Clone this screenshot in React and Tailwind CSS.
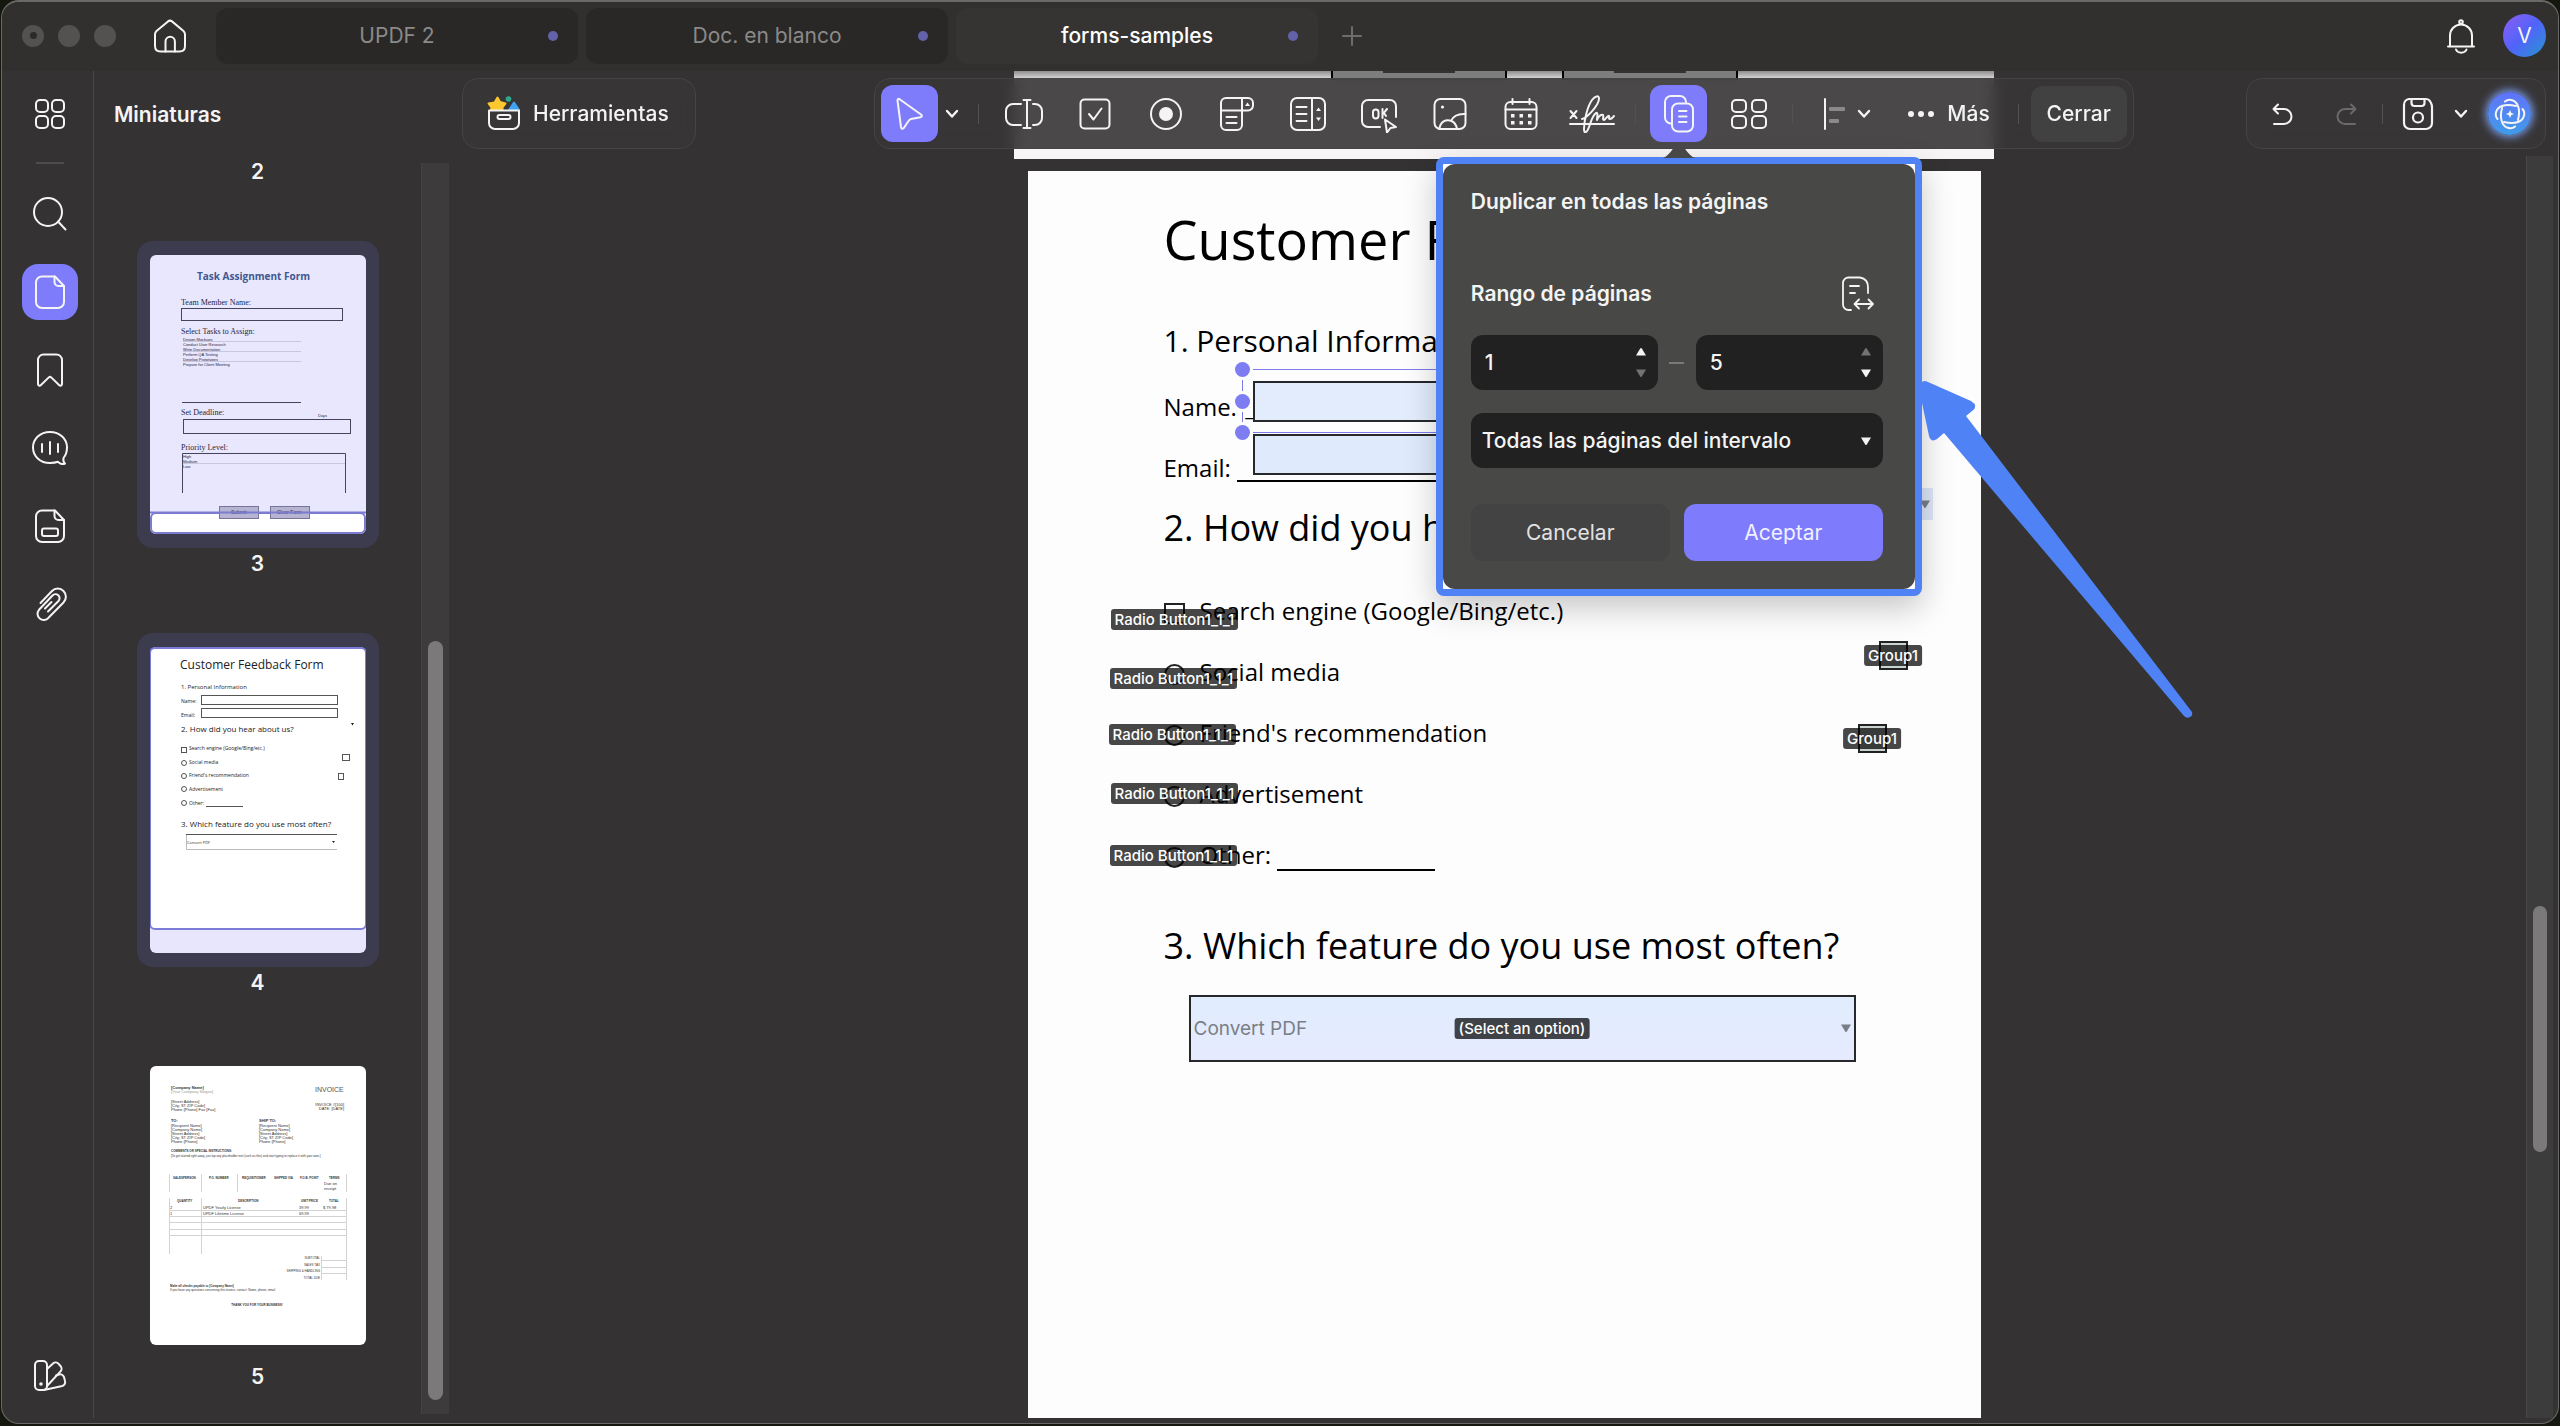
import { useState } from "react";

// Small wrapper so every line icon shares the same stroke setup
const Icon = ({ size = 36, width, height, stroke = 2, className = "", children }) => (
  <svg
    width={width || size}
    height={height || size}
    viewBox={`0 0 ${width || size} ${height || size}`}
    fill="none"
    stroke="currentColor"
    strokeWidth={stroke}
    strokeLinecap="round"
    strokeLinejoin="round"
    className={`shrink-0 ${className}`}
    aria-hidden="true"
  >
    {children}
  </svg>
);

const HomeIcon = () => (
  <Icon>
    <path d="M16 3.4 Q18 1.8 20 3.4 L31.5 13 Q33 14.4 33 16.5 V28 Q33 33.5 27.5 33.5 H8.5 Q3 33.5 3 28 V16.5 Q3 14.4 4.5 13 Z" />
    <path d="M13.5 33.5 V23.5 a4.7 4.7 0 0 1 9.4 0 V33.5" />
  </Icon>
);

const GridIcon = ({ wide }) => (
  <Icon width={wide ? 40 : 36} height={36}>
    {(wide ? [3, 23] : [4, 20]).map((x) =>
      [4, 20].map((y) => (
        <rect key={`${x}-${y}`} x={x} y={y} width={wide ? 14 : 12} height="12" rx="4" />
      ))
    )}
  </Icon>
);

const SearchIcon = () => (
  <Icon>
    <circle cx="16" cy="16" r="14" />
    <path d="M26 25.5 L33.5 33.5" />
  </Icon>
);

const PageIcon = () => (
  <Icon>
    <path d="M10 2.5 H23 L32 12 V28 a6 6 0 0 1 -6 6 H10 a6 6 0 0 1 -6 -6 V8.5 a6 6 0 0 1 6 -6 Z" />
    <path d="M22.5 2.5 V8 a4 4 0 0 0 4 4 H32" />
  </Icon>
);

const BookmarkIcon = () => (
  <Icon>
    <path d="M6 8 a5.5 5.5 0 0 1 5.5 -5.5 H24.5 a5.5 5.5 0 0 1 5.5 5.5 V32 a1.6 1.6 0 0 1 -2.7 1.2 L19.2 25.4 a1.8 1.8 0 0 0 -2.4 0 L8.7 33.2 A1.6 1.6 0 0 1 6 32 Z" />
  </Icon>
);

const CommentIcon = () => (
  <Icon width={38} height={36}>
    <path d="M33 34 C30 34 28 33 27 31.8 C24 33 22 33 19 33 C9 33 2 26 2 17.5 C2 9 9 2 19 2 C29 2 36 9 36 17.5 C36 22 34.5 25.5 32.5 28 C32 30 32.5 32 34 33.6 Z" />
    <path d="M11 14 V22 M19 12 V24 M27 14 V22" />
  </Icon>
);

const FormPageIcon = () => (
  <Icon>
    <path d="M10 2.5 H23 L32 12 V28 a6 6 0 0 1 -6 6 H10 a6 6 0 0 1 -6 -6 V8.5 a6 6 0 0 1 6 -6 Z" />
    <path d="M22.5 2.5 V8 a4 4 0 0 0 4 4 H32" />
    <rect x="10" y="20.5" width="16" height="7.5" rx="2" />
  </Icon>
);

const ClipIcon = () => (
  <Icon>
    <path d="M8.5 17 L20 5 a8 8 0 0 1 11.5 11.5 L16.5 31.8 a6 6 0 0 1 -9.5 -8 L20.5 9.5 a4 4 0 0 1 6 5.5 L16 25.5 M13 22.5 L19.5 16" />
  </Icon>
);

const SwatchIcon = () => (
  <Icon>
    <rect x="3" y="3" width="12" height="29" rx="4" />
    <path d="M15 11 L21 5.5 a4 4 0 0 1 5.6 0.3 L28.5 8 a4 4 0 0 1 -0.2 5.6 L15 28" />
    <path d="M24 17.5 L27 16.5 a4 4 0 0 1 5 2.6 L33 23 a4 4 0 0 1 -2.7 5 L12 32" />
    <circle cx="9" cy="26" r="0.8" />
  </Icon>
);

const Chevron = () => (
  <Icon width={14} height={10} stroke={2.4}>
    <path d="M2 2 L7 7.5 L12 2" />
  </Icon>
);

const Triangle = ({ up, className = "" }) => (
  <svg width="12" height="10" viewBox="0 0 12 10" className={className} fill="currentColor" aria-hidden="true">
    <path d={up ? "M1 8.5 L5.2 1.5 Q6 0.5 6.8 1.5 L11 8.5 Z" : "M1 1.5 L5.2 8.5 Q6 9.5 6.8 8.5 L11 1.5 Z"} />
  </svg>
);

const CursorIcon = () => (
  <Icon>
    <path d="M5.5 4.5 Q5.5 1.8 8 3.5 L29 18.5 Q31 20.5 28.5 21.2 L19 23 Q17.5 23.5 16.5 25 L11.8 32 Q9.6 34 9 31 Z" />
  </Icon>
);

const TextFieldIcon = () => (
  <Icon width={40}>
    <path d="M17 29 H9 a7 7 0 0 1 -7 -7 V15 a7 7 0 0 1 7 -7 H17 M29 8 H31 a7 7 0 0 1 7 7 V22 a7 7 0 0 1 -7 7 H29" />
    <path d="M23 4 V32 M19.5 4 H26.5 M19.5 32 H26.5" />
  </Icon>
);

const CheckboxIcon = () => (
  <Icon>
    <rect x="3.5" y="3.5" width="29" height="29" rx="4" />
    <path d="M12 18 L16.5 23.5 L24.5 12.5" />
  </Icon>
);

const RadioIcon = () => (
  <Icon>
    <circle cx="18" cy="18" r="15" />
    <circle cx="18" cy="18" r="6" fill="currentColor" />
  </Icon>
);

const DropdownIcon = () => (
  <Icon width={38} height={38}>
    <path d="M24 15.5 V30 a5 5 0 0 1 -5 5 H8 a5 5 0 0 1 -5 -5 V8 a5 5 0 0 1 5 -5 H30 a5 5 0 0 1 5 5 V10.5 a5 5 0 0 1 -5 5 H3 M24 3 V15.5" />
    <path d="M8.5 22 H18.5 M8.5 28 H18.5" />
    <path d="M27 11 L29.5 7.5 L32 11 Z" fill="currentColor" stroke="none" />
  </Icon>
);

const ListIcon = () => (
  <Icon width={38} height={38}>
    <rect x="2" y="3" width="34" height="32" rx="6" />
    <path d="M23 3 V35 M7.5 12 H17.5 M7.5 19 H17.5 M7.5 26 H17.5" />
    <path d="M27 16 L29.5 12.5 L32 16 Z M27 22.5 L29.5 26 L32 22.5 Z" fill="currentColor" stroke="none" />
  </Icon>
);

const OkIcon = () => (
  <Icon width={38} height={38}>
    <path d="M20 32 H8 a6 6 0 0 1 -6 -6 V11 a6 6 0 0 1 6 -6 H30 a6 6 0 0 1 6 6 V22" />
    <rect x="13" y="14.5" width="5.5" height="9" rx="2.7" />
    <path d="M22.5 14 V23 M27 14 L22.5 19.5 M24 18 L26 21" />
    <path d="M25 24.5 L36 32 L30.5 33 L27 37.500 Z" />
  </Icon>
);

const ImageIcon = () => (
  <Icon>
    <rect x="2.5" y="3" width="31" height="30" rx="6" />
    <circle cx="10.5" cy="11" r="1.6" fill="currentColor" stroke="none" />
    <path d="M7.5 33 C8 26 14 22.5 19.5 25 C23 26.5 24.5 30 25 33 M19 25 C21 20.5 26 17.5 33.5 18" />
  </Icon>
);

const CalendarIcon = () => (
  <Icon>
    <rect x="2.5" y="6" width="31" height="27" rx="5" />
    <path d="M2.5 13.5 H33.5 M9.5 3 V8 M26.5 3 V8" />
    <g fill="currentColor" stroke="none">
      {[8, 16.5, 25].map((x) => [18, 25].map((y) => <rect key={`${x}-${y}`} x={x} y={y} width="3.5" height="3.5" />))}
    </g>
  </Icon>
);

const SignIcon = () => (
  <Icon width={46} height={38}>
    <path d="M1.5 16 L7.5 23 M7.5 16 L1.5 23 M1 29 H45" />
    <path d="M13 24 C18 23 30 10 30 3.5 C30 0 26 1 23 5 C18 12 15 27 15 34 C15 39 18 38 20 32 C22 27 23 21 27 18 C29.5 17 28 22 28 25 C29 22 32 19 34 20 C35 22 33 25 35 25 C37 24 39 20 40 21 C41 22 39 24 41 24 C43 24 44 22 45 21" />
  </Icon>
);

const DuplicateIcon = () => (
  <Icon width={32} height={38}>
    <path d="M8 28.5 a6 6 0 0 1 -6 -6 V7 a6 6 0 0 1 6 -6 H17 a6 6 0 0 1 6 6" />
    <rect x="9" y="8.5" width="21" height="28" rx="6" />
    <path d="M16 16 H23.5 M16 21.5 H23.5 M16 27 H23.5" />
  </Icon>
);

const AlignIcon = () => (
  <Icon width={22} height={32}>
    <path d="M2 1 V31" />
    <g fill="#8b8a8a" stroke="none">
      <rect x="6" y="9" width="16" height="4" rx="1" />
      <rect x="6" y="21" width="10" height="4" rx="1" />
    </g>
  </Icon>
);

const ToolboxIcon = () => (
  <Icon width={34} height={36}>
    <path d="M10.5 1.5 L13 6 L18.5 7.5 L15.5 11.5 V14 H4 L4.5 11.5 L1.5 7.5 L7.5 6.5 Z" fill="#fdc82f" stroke="#fdc82f" />
    <circle cx="21.5" cy="3" r="2.8" fill="#2fa98c" stroke="none" />
    <path d="M22 14 L27 6.5 L32 14 Z" fill="#3fa3f2" stroke="#3fa3f2" />
    <path d="M2 14.5 H32 V27 a6 6 0 0 1 -6 6 H8 a6 6 0 0 1 -6 -6 Z" fill="#383636" />
    <rect x="10.5" y="19" width="13" height="4" rx="2" />
  </Icon>
);

const RangeIcon = () => (
  <Icon width={34} height={36} stroke={1.8}>
    <path d="M10 34 H7.5 a5.5 5.5 0 0 1 -5.5 -5.5 V7 a5.5 5.5 0 0 1 5.5 -5.5 H19 Q27 3 27 11 V17" />
    <path d="M9 10 H18 M9 17 H14 M14 28 H31.5 M18 23.5 L13.5 28 L18 32.5 M27.5 23.5 L32 28 L27.5 32.5" />
  </Icon>
);

const BellIcon = () => (
  <Icon>
    <circle cx="18" cy="4" r="1.8" />
    <path d="M5 28.5 H31 M7 28.5 V17.5 a11 11 0 0 1 22 0 V28.5 M13 31.5 a5.5 4.5 0 0 0 10.5 0" />
  </Icon>
);

const UndoIcon = ({ flip }) => (
  <Icon width={24} height={24} className={flip ? "-scale-x-100" : ""}>
    <path d="M2.5 7 H13 a7.5 7.5 0 0 1 0 15 H3 M7 2.5 L2.5 7 L7 11.5" />
  </Icon>
);

const SaveIcon = () => (
  <Icon stroke={2.2}>
    <path d="M9 3 H26 Q28 3 29.5 4.5 L31 7 Q32 9 32 11 V27 a6 6 0 0 1 -6 6 H10 a6 6 0 0 1 -6 -6 V9 a6 6 0 0 1 5 -6 Z" />
    <path d="M11.5 3 V7 a3 3 0 0 0 3 3 H21.5 a3 3 0 0 0 3 -3 V3" />
    <circle cx="18" cy="21.5" r="5" />
  </Icon>
);

const AiIcon = () => (
  <Icon width={32} height={32} stroke={2}>
    <path d="M11 3.5 C15 0 22 2 24 8 C26 13 25 18 24 22" />
    <path d="M28.5 11 C32 15 30 22 24 24 C19 26 14 25 10 24" />
    <path d="M21 28.5 C17 32 10 30 8 24 C6 19 7 14 8 10" />
    <path d="M3.5 21 C0 17 2 10 8 8 C13 6 18 7 22 8" />
    <path d="M16 12 L17.2 14.8 L20 16 L17.2 17.2 L16 20 L14.8 17.2 L12 16 L14.8 14.8 Z" fill="currentColor" stroke="none" />
  </Icon>
);

const TaskThumb = () => (
  <svg viewBox="0 0 216 279" className="block w-full" fontFamily="'Liberation Serif', serif" fontWeight="400" fontSize="8" fill="#26263a">
    <rect width="216" height="279" rx="6" fill="#e9e7fe" />
    <text x="47" y="25" fontSize="10" fontWeight="700" fontFamily="'Open Sans', sans-serif" fill="#40588f">Task Assignment Form</text>
    <text x="31" y="50">Team Member Name:</text>
    <text x="31" y="79">Select Tasks to Assign:</text>
    <text x="31" y="160">Set Deadline:</text>
    <text x="31" y="195">Priority Level:</text>
    <g fontFamily="'Liberation Sans', sans-serif" fontSize="4">
      {["Design Mockups", "Conduct User Research", "Write Documentation", "Perform QA Testing", "Develop Prototypes", "Prepare for Client Meeting"].map((t, i) => (
        <text key={t} x="33" y={86 + i * 5}>{t}</text>
      ))}
      <text x="168" y="162">Days</text>
      <text x="33" y="203">High</text>
      <text x="33" y="208">Medium</text>
      <text x="33" y="213">Low</text>
    </g>
    <g fill="none" stroke="#45435e">
      <rect x="31.5" y="53.5" width="161" height="12" />
      <path d="M32 147.5 H151" />
      <rect x="33.5" y="164.5" width="167" height="14" />
      <path d="M32.5 238 V198.5 H195.5 V238" />
    </g>
    <path d="M33 86.5 H151 M33 96.5 H151 M33 106.5 H151 M33 208.5 H195" stroke="#c9c6de" />
    <rect x="1" y="258" width="214" height="20" rx="5" fill="#fff" stroke="#7b7bd0" strokeWidth="2" />
    <g fill="#b6b3d3" stroke="#77749a">
      <rect x="69.5" y="251.5" width="39" height="12" />
      <rect x="120.5" y="251.5" width="39" height="12" />
    </g>
    <g fontFamily="'Liberation Sans', sans-serif" fontSize="5">
      <text x="81" y="259">Submit</text>
      <text x="127" y="259">Clear Form</text>
    </g>
    <path d="M0 257.5 H216" stroke="#7b7bd0" strokeWidth="2" />
  </svg>
);

const FeedbackThumb = () => (
  <svg viewBox="0 0 216 306" className="block w-full" fontFamily="'Open Sans', sans-serif" fontWeight="400" fontSize="5" fill="#222">
    <rect width="216" height="306" rx="6" fill="#e8e6fc" />
    <rect x="0" y="1" width="216" height="281" rx="5" fill="#fff" stroke="#7b7bd8" strokeWidth="2" />
    <text x="30" y="22" fontSize="12">Customer Feedback Form</text>
    <text x="31" y="42" fontSize="6">1. Personal Information</text>
    <text x="31" y="56">Name:</text>
    <text x="31" y="70">Email:</text>
    <text x="31" y="85" fontSize="8">2. How did you hear about us?</text>
    <text x="39" y="103">Search engine (Google/Bing/etc.)</text>
    <text x="39" y="117">Social media</text>
    <text x="39" y="130">Friend's recommendation</text>
    <text x="39" y="144">Advertisement</text>
    <text x="39" y="158">Other:</text>
    <text x="31" y="180" fontSize="8">3. Which feature do you use most often?</text>
    <text x="37" y="197" fontSize="4">Convert PDF</text>
    <g fill="none" stroke="#555">
      <rect x="51.5" y="48.5" width="136" height="9" />
      <rect x="51.5" y="61.5" width="136" height="9" />
      <rect x="31.5" y="100.5" width="5" height="5" />
      {[116, 129, 142, 156].map((y) => <circle key={y} cx="34" cy={y} r="2.5" />)}
      <path d="M56 159.5 H93 M36 187.5 H187" />
      <rect x="192.5" y="107.5" width="7" height="6" />
      <rect x="188.5" y="126.5" width="5" height="6" />
    </g>
    <path d="M36.5 188 V202.5 H187" fill="none" stroke="#bbb" />
    <path d="M201 76 H204 L202.5 78.5 Z M182 194 H185 L183.5 196 Z" />
  </svg>
);

const InvoiceThumb = () => (
  <svg viewBox="0 0 216 279" className="block w-full" fontFamily="'Liberation Sans', sans-serif" fontWeight="400" fontSize="4" fill="#333">
    <rect width="216" height="279" rx="6" fill="#fff" />
    <text x="21" y="23" fontWeight="700">[Company Name]</text>
    <text x="21" y="27" fill="#999">[Your Company Slogan]</text>
    <text x="165" y="26" fontSize="7" fill="#555">INVOICE</text>
    {["[Street Address]", "[City, ST ZIP Code]", "Phone [Phone]  Fax [Fax]"].map((t, i) => (
      <text key={t} x="21" y={37 + i * 4}>{t}</text>
    ))}
    <text x="194" y="40" textAnchor="end">INVOICE #[100]</text>
    <text x="194" y="44" textAnchor="end">DATE: [DATE]</text>
    {[21, 109].map((x) => (
      <g key={x}>
        <text x={x} y="56" fontWeight="700">{x === 21 ? "TO:" : "SHIP TO:"}</text>
        {["[Recipient Name]", "[Company Name]", "[Street Address]", "[City, ST ZIP Code]", "Phone [Phone]"].map((t, i) => (
          <text key={t} x={x} y={61 + i * 4}>{t}</text>
        ))}
      </g>
    ))}
    <text x="21" y="86" fontSize="3" fontWeight="700">COMMENTS OR SPECIAL INSTRUCTIONS:</text>
    <text x="21" y="91" fontSize="3">[To get started right away, just tap any placeholder text (such as this) and start typing to replace it with your own.]</text>
    <g fontSize="3" fontWeight="700">
      {[[23, "SALESPERSON"], [59, "P.O. NUMBER"], [92, "REQUISITIONER"], [124, "SHIPPED VIA"], [150, "F.O.B. POINT"], [179, "TERMS"]].map(([x, t]) => (
        <text key={t} x={x} y="113">{t}</text>
      ))}
      {[[27, "QUANTITY"], [88, "DESCRIPTION"], [151, "UNIT PRICE"], [179, "TOTAL"]].map(([x, t]) => (
        <text key={t} x={x} y="136">{t}</text>
      ))}
    </g>
    <text x="174" y="119">Due on</text>
    <text x="174" y="124">receipt</text>
    <text x="20" y="143">2</text>
    <text x="53" y="143">UPDF Yearly License</text>
    <text x="149" y="143">39.99</text>
    <text x="173" y="143">$ 79.98</text>
    <text x="20" y="149">1</text>
    <text x="53" y="149">UPDF Lifetime License</text>
    <text x="149" y="149">69.99</text>
    <path
      d="M19.5 108 V126 M51.5 108 V126 M87.5 108 V126 M196.5 108 V126 M19.5 132 V188 M51.5 132 V188 M196.5 132 V214 M171.5 190 V214 M19 144.5 H196 M19 150.5 H196 M19 156.5 H196 M19 163.5 H196 M19 169.5 H196 M171 194.5 H196 M171 201.5 H196 M171 207.5 H196"
      stroke="#d3d3d3"
      fill="none"
    />
    {["SUBTOTAL", "SALES TAX", "SHIPPING & HANDLING", "TOTAL DUE"].map((t, i) => (
      <text key={t} x="170" y={193 + i * 6.5} fontSize="3" textAnchor="end">{t}</text>
    ))}
    <text x="20" y="221" fontSize="3" fontWeight="700">Make all checks payable to [Company Name]</text>
    <text x="20" y="225" fontSize="3">If you have any questions concerning this invoice, contact: Name, phone, email</text>
    <text x="107" y="240" fontSize="3" fontWeight="700" textAnchor="middle">THANK YOU FOR YOUR BUSINESS!</text>
  </svg>
);

const tabs = [
  { title: "UPDF 2", active: false },
  { title: "Doc. en blanco", active: false },
  { title: "forms-samples", active: true },
];

const TopBar = () => (
  <header className="flex h-[69px] shrink-0 items-center bg-[#32302f] pb-0.5 pl-5 pr-3">
    <div className="flex gap-[14px]">
      <span className="flex size-[22px] items-center justify-center rounded-full bg-[#535251]">
        <span className="size-[7px] rounded-full bg-[#2b2a29]" />
      </span>
      <span className="size-[22px] rounded-full bg-[#535251]" />
      <span className="size-[22px] rounded-full bg-[#535251]" />
    </div>
    <button title="Inicio" className="ml-9">
      <HomeIcon />
    </button>
    <nav className="ml-7 flex gap-2">
      {tabs.map((tab) => (
        <button
          key={tab.title}
          className={`relative h-14 w-[362px] rounded-xl text-[21px] ${
            tab.active ? "bg-[#363433] font-medium text-white" : "bg-[#292826] text-[#8b8a89]"
          }`}
        >
          {tab.title}
          <span className="absolute right-5 top-1/2 size-[10px] -translate-y-1/2 rounded-full bg-[#6461ab]" />
        </button>
      ))}
    </nav>
    <button title="Nueva pestaña" className="ml-6 text-[#6e6d6c]">
      <Icon width={20} height={20}>
        <path d="M10 1 V19 M1 10 H19" />
      </Icon>
    </button>
    <button title="Notificaciones" className="ml-auto">
      <BellIcon />
    </button>
    <button className="ml-6 size-[43px] rounded-full bg-linear-135 from-[#8b5cf0] via-[#4f63fb] to-[#1a92cc] text-[21px]">
      V
    </button>
  </header>
);

const sideItems = [
  ["Buscar", <SearchIcon />],
  ["Miniaturas", <PageIcon />],
  ["Marcadores", <BookmarkIcon />],
  ["Comentarios", <CommentIcon />],
  ["Formularios", <FormPageIcon />],
  ["Adjuntos", <ClipIcon />],
];

const SideRail = () => (
  <aside className="flex w-[92px] shrink-0 flex-col items-center border-r border-[#4a4948] pt-[15px] pb-[14px] pl-1">
    <button title="Menú" className="flex size-14 items-center justify-center">
      <GridIcon />
    </button>
    <span className="mt-5 h-0.5 w-7 bg-[#4d4c4b]" />
    <div className="mt-[22px] flex flex-col gap-[22px]">
      {sideItems.map(([label, icon]) => (
        <button
          key={label}
          title={label}
          className={`flex size-14 items-center justify-center rounded-2xl ${
            label === "Miniaturas" ? "bg-[#7e7cfa]" : ""
          }`}
        >
          {icon}
        </button>
      ))}
    </div>
    <button title="Tema" className="mt-auto flex size-14 items-center justify-center">
      <SwatchIcon />
    </button>
  </aside>
);

const ThumbPanel = () => (
  <section className="flex w-[361px] shrink-0 overflow-hidden">
    <div className="flex flex-1 flex-col">
      <h2 className="ml-5 mt-7 text-[21px] leading-8 font-semibold">Miniaturas</h2>
      <ol className="mt-[25px] flex flex-col items-center text-[21px] leading-8 font-semibold">
        <li>2</li>
        <li className="mt-[53px] flex flex-col items-center">
          <div className="w-[242px] rounded-2xl bg-[#3d3b4e] px-[13px] py-[14px]">
            <TaskThumb />
          </div>
          <span>3</span>
        </li>
        <li className="mt-[53px] flex flex-col items-center">
          <div className="w-[242px] rounded-2xl bg-[#3d3b4e] px-[13px] py-[14px]">
            <FeedbackThumb />
          </div>
          <span>4</span>
        </li>
        <li className="mt-[67px] flex flex-col items-center">
          <div className="w-[242px] px-[13px]">
            <InvoiceThumb />
          </div>
          <span className="mt-4">5</span>
        </li>
      </ol>
    </div>
    <div className="mt-[92px] mb-1 w-7 border-l border-[#454344] bg-[#3d3b3c] px-1.5 pt-[478px] pb-[14px]">
      <div className="h-full rounded-full bg-[#7b797a]" />
    </div>
    <div className="w-[6px]" />
  </section>
);

const ToolButton = ({ label, children }) => (
  <button title={label} className="flex h-14 w-[71px] items-center justify-center">
    {children}
  </button>
);

const Divider = () => <span className="h-5 w-px bg-[#535252]" />;

const DuplicatePopup = () => {
  const [from, setFrom] = useState(1);
  const [to, setTo] = useState(5);

  const fields = [
    { id: "from", label: "Desde", value: from, set: setFrom },
    { id: "to", label: "Hasta", value: to, set: setTo },
  ];

  return (
    <div className="absolute left-1/2 top-full mt-[15px] w-[486px] -translate-x-1/2">
      {/* Caret under the toolbar button */}
      <svg width="32" height="14" viewBox="0 0 32 14" className="absolute -top-[13px] left-1/2 -translate-x-1/2" aria-hidden="true">
        <path d="M0 14 C6 12 10 4 12.5 1.5 Q16 -1 19.5 1.5 C22 4 26 12 32 14 Z" fill="#484847" />
      </svg>

      <div className="rounded-lg border-[7px] border-[#4f83f5] bg-white shadow-[0_12px_32px_rgba(0,0,0,0.22)]">
        <form className="rounded-xl bg-[#484847] pt-[22px] pr-8 pb-7 pl-7" onSubmit={(e) => e.preventDefault()}>
          <h3 className="text-[21px] leading-8 font-semibold">Duplicar en todas las páginas</h3>

          <div className="mt-[58px] flex h-9 items-center justify-between pr-2">
            <span className="text-[21px] leading-8 font-semibold">Rango de páginas</span>
            <button type="button" title="Rango">
              <RangeIcon />
            </button>
          </div>

          <div className="mt-[23px] flex items-center justify-between">
            {fields.map((f, i) => (
              <div key={f.id} className="contents">
                {i === 1 && <span className="h-0.5 w-[15px] bg-[#7b7a7a]" />}
                <div className="relative flex h-[55px] w-[187px] items-center rounded-xl bg-[#212122]">
                  <input
                    type="text"
                    inputMode="numeric"
                    aria-label={f.label}
                    value={f.value}
                    onChange={(e) => f.set(e.target.value)}
                    className="w-full bg-transparent px-[14px] text-[21px] font-medium outline-none"
                  />
                  <div className="absolute right-[11px] flex flex-col gap-[11px]">
                    <button type="button" title="Más" className={i === 1 ? "text-[#747373]" : ""} onClick={() => f.set(Math.min(5, Number(f.value) + 1))}>
                      <Triangle up />
                    </button>
                    <button type="button" title="Menos" className={i === 0 ? "text-[#747373]" : ""} onClick={() => f.set(Math.max(1, Number(f.value) - 1))}>
                      <Triangle />
                    </button>
                  </div>
                </div>
              </div>
            ))}
          </div>

          <div className="relative mt-[23px]">
            <select aria-label="Páginas" className="h-[55px] w-full appearance-none rounded-xl bg-[#212122] px-[11px] text-[21px] font-medium outline-none">
              <option>Todas las páginas del intervalo</option>
              <option>Páginas pares</option>
              <option>Páginas impares</option>
            </select>
            <Triangle className="pointer-events-none absolute right-[11px] top-[23px]" />
          </div>

          <div className="mt-9 grid grid-cols-2 gap-[14px] text-[21px]">
            <button type="button" className="h-[57px] rounded-xl bg-[#444344] text-[#e2e2e2]">
              Cancelar
            </button>
            <button type="submit" className="h-[57px] rounded-xl bg-[#7e7cfc] text-[#f0f0ff]">
              Aceptar
            </button>
          </div>
        </form>
      </div>

      {/* Callout arrow */}
      <svg width="272" height="344" viewBox="0 0 272 344" className="absolute left-full top-[222px]" aria-hidden="true">
        <path
          d="M0 3 Q2 1 6 3 L49 22 Q57 27 50 32 L44 37 L270 333 Q271 337 268 338 Q265 340 262 337 L22 54 L15 60 Q9 64 7 57 L0 24 Z"
          fill="#4f83f5"
        />
      </svg>
    </div>
  );
};

const panelClass = "flex h-[71px] items-center rounded-2xl border border-[#464444] bg-[#373536]/90 backdrop-blur-sm";

const Toolbar = () => (
  <div className="absolute inset-x-0 top-[7px] z-10 grid grid-cols-[1fr_auto_1fr] px-[7px]">
    <button className={`${panelClass} w-[234px] gap-3 justify-self-start pl-6 text-[21px] font-medium`}>
      <ToolboxIcon />
      Herramientas
    </button>

    <div className={`${panelClass} px-1.5`}>
      <button title="Seleccionar" className="flex size-[57px] items-center justify-center rounded-xl bg-[#7e7cfa]">
        <CursorIcon />
      </button>
      <button title="Opciones" className="flex h-14 w-7 items-center justify-center">
        <Chevron />
      </button>
      <span className="w-3" />
      <Divider />
      <span className="w-[9px]" />
      <ToolButton label="Campo de texto"><TextFieldIcon /></ToolButton>
      <ToolButton label="Casilla"><CheckboxIcon /></ToolButton>
      <ToolButton label="Botón de radio"><RadioIcon /></ToolButton>
      <ToolButton label="Desplegable"><DropdownIcon /></ToolButton>
      <ToolButton label="Lista"><ListIcon /></ToolButton>
      <ToolButton label="Botón"><OkIcon /></ToolButton>
      <ToolButton label="Imagen"><ImageIcon /></ToolButton>
      <ToolButton label="Fecha"><CalendarIcon /></ToolButton>
      <ToolButton label="Firma"><SignIcon /></ToolButton>
      <span className="w-2" />
      <Divider />
      <div className="relative ml-[14px]">
        <button title="Duplicar" className="flex size-[57px] items-center justify-center rounded-xl bg-[#7e7cfa]">
          <DuplicateIcon />
        </button>
        <DuplicatePopup />
      </div>
      <span className="w-[6px]" />
      <ToolButton label="Varias copias"><GridIcon wide /></ToolButton>
      <span className="w-2" />
      <Divider />
      <button title="Alinear" className="ml-[30px] flex h-14 items-center gap-3">
        <AlignIcon />
        <Chevron />
      </button>
      <button className="ml-9 flex h-14 items-center gap-3 text-[21px] font-medium">
        <svg width="28" height="8" viewBox="0 0 28 8" fill="currentColor" aria-hidden="true">
          <circle cx="4" cy="4" r="3" />
          <circle cx="14" cy="4" r="3" />
          <circle cx="24" cy="4" r="3" />
        </svg>
        Más
      </button>
      <span className="w-7" />
      <Divider />
      <button className="ml-3 h-14 w-[96px] rounded-xl bg-[#424141] text-[21px] font-medium">Cerrar</button>
    </div>

    <div className={`${panelClass} justify-self-end pl-6 pr-[14px]`}>
      <button title="Deshacer"><UndoIcon /></button>
      <button title="Rehacer" className="ml-[39px] text-[#6b6a6a]"><UndoIcon flip /></button>
      <span className="w-6" />
      <Divider />
      <button title="Guardar" className="ml-[17px]"><SaveIcon /></button>
      <button title="Opciones de guardado" className="ml-[18px] flex h-14 items-center"><Chevron /></button>
      <button title="IA" className="ml-5 flex size-[43px] items-center justify-center rounded-full bg-linear-to-b from-[#5f72fb] to-[#3f9be8] shadow-[0_0_8px_2px_#7c9ff0]">
        <AiIcon />
      </button>
    </div>
  </div>
);

const Badge = ({ className, children }) => (
  <span className={`absolute flex h-[21px] items-center rounded-[3px] bg-black/72 px-1 font-['Inter',sans-serif] text-[15px] leading-none font-medium whitespace-nowrap text-white ${className}`}>
    {children}
  </span>
);

const options = [
  { label: "Search engine (Google/Bing/etc.)", mark: "rounded-none", badge: "top-[14px] -left-[53px]" },
  { label: "Social media", mark: "rounded-full", badge: "top-3 -left-[54px]" },
  { label: "Friend's recommendation", mark: "rounded-full", badge: "top-[7px] -left-[55px]" },
  { label: "Advertisement", mark: "rounded-full", badge: "top-[5px] -left-[53px]" },
  { label: "Other:", mark: "rounded-full", badge: "top-[6px] -left-[54px]", line: true },
];

const groups = ["left-[851px] top-[470px]", "left-[830px] top-[553px]"];

// Bottom edge of the previous page, peeking out around the toolbar
const PreviousPage = () => (
  <div className="mx-auto h-[88px] w-[980px] bg-[#f7f5f5]">
    <div className="flex h-[9px] bg-linear-to-b from-[#8f8e8e] to-[#e8e7e7] pl-[317px]">
      <div className="w-[176px] border-x-2 border-black bg-[#7e7d7d] px-[50px]">
        <div className="h-0.5 bg-[#333]" />
      </div>
      <div className="w-[55px]" />
      <div className="w-[176px] border-x-2 border-black bg-[#7e7d7d] px-[50px]">
        <div className="h-0.5 bg-[#333]" />
      </div>
    </div>
  </div>
);

const FormPage = () => (
  <article className="relative mx-auto mt-3 w-[953px] flex-1 bg-[#fefdfe] px-[136px] pt-8 font-['Open_Sans',sans-serif] text-2xl leading-8 text-black">
    <h1 className="text-[54px] leading-[72px] whitespace-nowrap">Customer Feedback Form</h1>
    <h2 className="mt-[46px] text-[30px] leading-10">1. Personal Information</h2>
    <div className="mt-[30px]">
      <label htmlFor="name">Name.</label> <span className="ml-0.5">_</span>
    </div>
    <div className="mt-[29px] flex gap-[6px]">
      <label htmlFor="email">Email:</label>
      <span className="mb-0.5 flex-1 border-b-2 border-black" />
    </div>
    <h2 className="mt-[18px] text-[36px] leading-[52px]">2. How did you hear about us?</h2>

    <div className="mt-[41px] flex flex-col gap-[29px]">
      {options.map((o) => (
        <div key={o.label} className="relative flex items-center">
          <label className="flex items-center gap-[15px]">
            <input
              type={o.mark === "rounded-full" ? "radio" : "checkbox"}
              name="source"
              className={`mt-1 size-[21px] appearance-none border-2 border-[#222] ${o.mark}`}
            />
            {o.label}
          </label>
          {o.line && <span className="ml-[6px] h-8 w-[158px] border-b-2 border-black" />}
          <Badge className={o.badge}>Radio Button1_1_1</Badge>
        </div>
      ))}
    </div>

    <h2 className="mt-[49px] text-[36px] leading-[52px] whitespace-nowrap">3. Which feature do you use most often?</h2>
    <div className="relative mt-[23px] ml-[25px] w-[667px] font-['Inter',sans-serif]">
      <select
        aria-label="Feature"
        className="h-[67px] w-full appearance-none border-2 border-[#26282c] bg-linear-to-b from-[#e0edfd] to-[#e6eafe] px-[3px] text-[19px] text-[#7a7e86]"
      >
        <option>Convert PDF</option>
      </select>
      <Triangle className="absolute right-1 top-7 text-[#7a7e86]" />
      <Badge className="left-1/2 top-[23px] -translate-x-1/2">(Select an option)</Badge>
    </div>

    {/* Form fields dropped on the page */}
    <input id="name" type="text" className="absolute left-[225px] top-[210px] h-[41px] w-[604px] border-2 border-[#26282c] bg-[#e3ecfd]" />
    <input id="email" type="text" className="absolute left-[225px] top-[263px] h-[41px] w-[604px] border-2 border-[#26282c] bg-[#dfebfd]" />
    <div className="absolute left-[214px] top-[198px] h-[64px] w-[627px] border border-[#7d7cea]">
      {["-top-2", "top-6", "-bottom-2"].map((pos) => (
        <span key={pos} className={`absolute -left-2 size-[15px] rounded-full bg-[#7d7cf0] ring-3 ring-[#fdfdfd] ${pos}`} />
      ))}
    </div>
    <div className="absolute left-[860px] top-[317px] flex h-8 w-[45px] items-center justify-end bg-[#dde6f8] pr-0.5 text-[#7a7e86]">
      <Triangle />
    </div>
    {groups.map((pos) => (
      <div key={pos} className={`absolute size-[29px] border-2 border-[#222] bg-[#c9d4d0] ${pos}`}>
        <Badge className="left-1/2 top-[2px] -translate-x-1/2">Group1</Badge>
      </div>
    ))}
  </article>
);

const App = () => (
  <div className="h-screen overflow-hidden bg-[#14180f] px-px pb-0.5 font-['Inter',sans-serif] text-[#f4f4f4]">
    <div className="flex h-full flex-col overflow-hidden rounded-[18px] border border-t-2 border-[#6a6968] bg-[#343233]">
      <TopBar />
      <div className="flex min-h-0 flex-1 pb-[5px] pr-[5px]">
        <SideRail />
        <ThumbPanel />
        <main className="relative flex min-w-0 flex-1 flex-col overflow-hidden">
          <Toolbar />
          <PreviousPage />
          <FormPage />
          <div className="absolute bottom-0 right-0 top-[85px] w-[27px] border-l border-[#4a4949] bg-[#3d3c3c] px-1.5 pt-[750px]">
            <div className="h-[246px] rounded-full bg-[#7b797a]" />
          </div>
        </main>
      </div>
    </div>
  </div>
);

export default App;
